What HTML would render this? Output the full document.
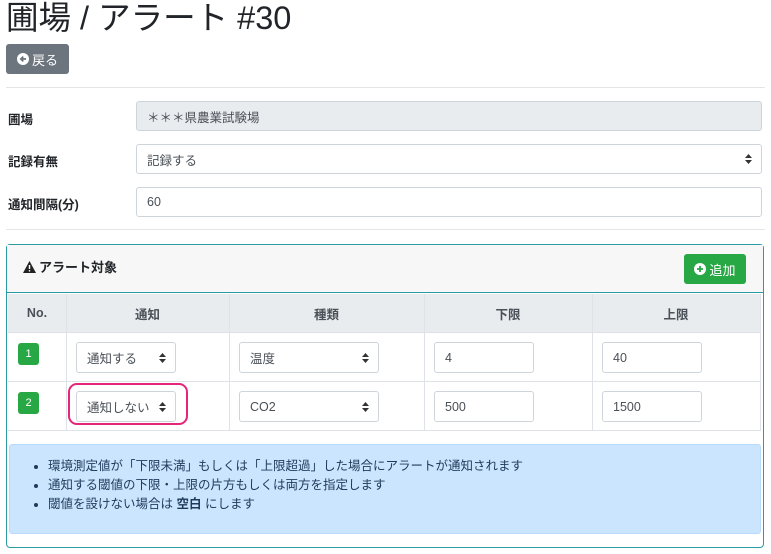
<!DOCTYPE html>
<html><head><meta charset="utf-8"><style>
*{box-sizing:border-box;margin:0;padding:0}
body{width:771px;height:554px;overflow:hidden;background:#fff;font-family:"Liberation Sans","Noto Sans CJK JP",sans-serif;color:#212529;font-size:13px;position:relative}
.a{position:absolute}
h1{position:absolute;left:6px;top:-2px;font-size:32.5px;font-weight:400;line-height:40px}
.btn{position:absolute;border-radius:3px;color:#fff;font-size:13px;display:flex;align-items:center;justify-content:center;gap:3px}
.hr{position:absolute;left:6px;right:6px;height:1px;background:#e5e5e5}
.lbl{position:absolute;left:8px;font-weight:bold;font-size:12.5px}
.inp{position:absolute;border:1px solid #ced4da;border-radius:3px;background:#fff;padding-left:10px;display:flex;align-items:center;font-size:12.5px;color:#495057}
.arr{position:absolute;right:9px;top:50%;transform:translateY(-50%);width:7px;height:10px}
.th{position:absolute;top:294px;height:38px;font-weight:bold;color:#495057;display:flex;align-items:center;justify-content:center;font-size:12.5px}
.vl{position:absolute;width:1px;background:#dee2e6;top:294px;height:136px}
.badge{position:absolute;left:18px;width:21px;height:22px;background:#28a745;color:#fff;border-radius:3px;font-size:11px;display:flex;align-items:center;justify-content:center}
li{margin-bottom:2px}
</style></head><body>
<h1>圃場 / アラート #30</h1>
<div class="btn" style="left:6px;top:44px;width:63px;height:30px;background:#6c757d"><svg width="12" height="12" viewBox="0 0 12 12"><circle cx="6" cy="6" r="6" fill="#fff"/><path d="M9 6H4.2M6.3 3.6L3.8 6 6.3 8.4" stroke="#6c757d" stroke-width="1.7" fill="none"/></svg>戻る</div>
<div class="hr" style="top:87px"></div>
<div class="lbl" style="top:109px">圃場</div>
<div class="inp" style="left:136px;top:101px;width:626px;height:30px;background:#e9ecef">＊＊＊県農業試験場</div>
<div class="lbl" style="top:151px">記録有無</div>
<div class="inp" style="left:136px;top:144px;width:626px;height:30px">記録する<svg class="arr" viewBox="0 0 7 10"><path d="M0 4L3.5 0 7 4zM0 6L3.5 10 7 6z" fill="#333"/></svg></div>
<div class="lbl" style="top:194px">通知間隔(分)</div>
<div class="inp" style="left:136px;top:187px;width:626px;height:30px">60</div>
<div class="hr" style="top:229px"></div>
<div class="a" style="left:6px;top:244px;width:758px;height:304px;border:1px solid #2a9aa5;border-radius:4px"></div>
<div class="a" style="left:7px;top:245px;width:756px;height:48px;background:#f7f7f7;border-bottom:1px solid #2a9aa5"></div>
<div class="a" style="left:23px;top:257px;font-weight:bold;font-size:13px;display:flex;align-items:center;gap:3px"><svg width="13" height="12" viewBox="0 0 13 12"><path d="M6.5 0L13 12H0z" fill="#222"/><path d="M6.5 4v4" stroke="#fff" stroke-width="1.5"/><circle cx="6.5" cy="9.8" r=".8" fill="#fff"/></svg>アラート対象</div>
<div class="btn" style="left:684px;top:254px;width:62px;height:30px;background:#28a745"><svg width="12" height="12" viewBox="0 0 12 12"><circle cx="6" cy="6" r="6" fill="#fff"/><path d="M6 3v6M3 6h6" stroke="#28a745" stroke-width="1.8"/></svg>追加</div>
<div class="a" style="left:8px;top:294px;width:753px;height:38px;background:#e9ecef"></div>
<div class="a" style="left:8px;top:332px;width:753px;height:1px;background:#dee2e6"></div>
<div class="a" style="left:8px;top:381px;width:753px;height:1px;background:#dee2e6"></div>
<div class="a" style="left:8px;top:430px;width:753px;height:1px;background:#dee2e6"></div>
<div class="vl" style="left:66px"></div><div class="vl" style="left:229px"></div><div class="vl" style="left:424px"></div><div class="vl" style="left:592px"></div><div class="vl" style="left:760px"></div>
<div class="th" style="left:8px;width:58px">No.</div>
<div class="th" style="left:66px;width:163px">通知</div>
<div class="th" style="left:229px;width:195px">種類</div>
<div class="th" style="left:424px;width:168px">下限</div>
<div class="th" style="left:592px;width:168px">上限</div>
<div class="badge" style="top:343px">1</div>
<div class="badge" style="top:392px">2</div>
<div class="inp" style="left:76px;top:342px;width:100px;height:31px">通知する<svg class="arr" viewBox="0 0 7 10"><path d="M0 4L3.5 0 7 4zM0 6L3.5 10 7 6z" fill="#333"/></svg></div>
<div class="inp" style="left:239px;top:342px;width:140px;height:31px">温度<svg class="arr" viewBox="0 0 7 10"><path d="M0 4L3.5 0 7 4zM0 6L3.5 10 7 6z" fill="#333"/></svg></div>
<div class="inp" style="left:434px;top:342px;width:100px;height:31px">4</div>
<div class="inp" style="left:602px;top:342px;width:100px;height:31px">40</div>
<div class="inp" style="left:76px;top:391px;width:100px;height:31px">通知しない<svg class="arr" viewBox="0 0 7 10"><path d="M0 4L3.5 0 7 4zM0 6L3.5 10 7 6z" fill="#333"/></svg></div>
<div class="inp" style="left:239px;top:391px;width:140px;height:31px">CO2<svg class="arr" viewBox="0 0 7 10"><path d="M0 4L3.5 0 7 4zM0 6L3.5 10 7 6z" fill="#333"/></svg></div>
<div class="inp" style="left:434px;top:391px;width:100px;height:31px">500</div>
<div class="inp" style="left:602px;top:391px;width:100px;height:31px">1500</div>
<div class="a" style="left:68px;top:383px;width:120px;height:42px;border:2px solid #e5257a;border-radius:9px"></div>
<div class="a" style="left:9px;top:444px;width:752px;height:90px;background:#cce5ff;border:1px solid #b8daff;border-radius:3px;color:#1e3a5a;padding:13px 0 0 38px;font-size:12.5px;line-height:17px">
<ul><li>環境測定値が「下限未満」もしくは「上限超過」した場合にアラートが通知されます</li><li>通知する閾値の下限・上限の片方もしくは両方を指定します</li><li>閾値を設けない場合は <b>空白</b> にします</li></ul></div>
</body></html>
